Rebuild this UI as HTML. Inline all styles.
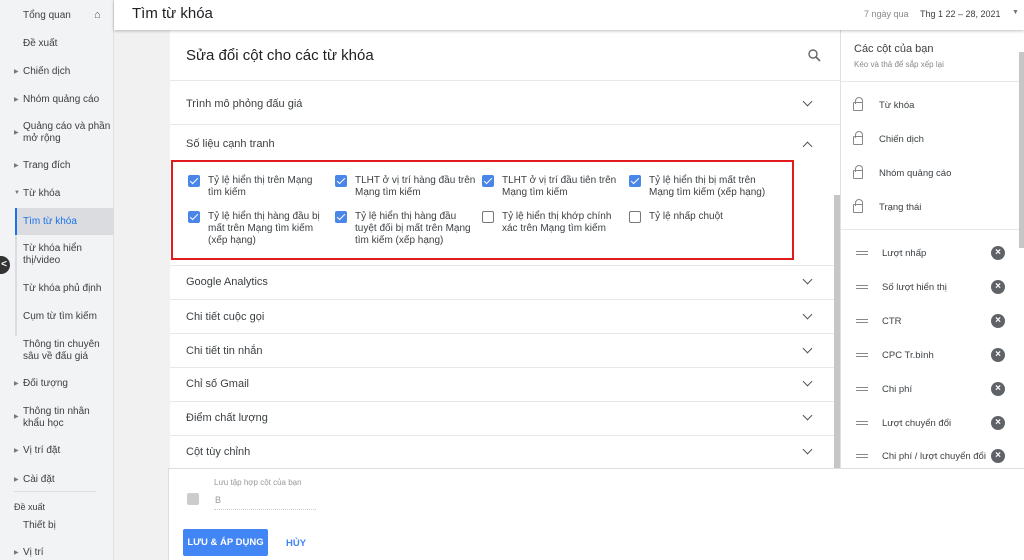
<!DOCTYPE html>
<html><head><meta charset="utf-8"><style>
*{margin:0;padding:0;box-sizing:border-box}
body{width:1024px;height:560px;overflow:hidden;background:#f1f1f1;font-family:"Liberation Sans",sans-serif;color:#3c4043;position:relative}
.a{position:absolute}
.sb{left:0;top:0;width:114px;height:560px;background:#f1f3f4;border-right:1px solid #e0e0e0}
.si{position:absolute;left:23px;font-size:10px;color:#3c4043;line-height:12px}
.tri{position:absolute;left:14px;font-size:6px;color:#777}
.hdr{left:114px;top:0;width:910px;height:30px;background:#fff;box-shadow:0 1px 3px rgba(0,0,0,.25);z-index:2}
.dlg{left:170px;top:30px;width:670px;height:438px;background:#fff}
.row{position:absolute;left:16px;font-size:11px;color:#3c4043}
.chev{position:absolute;left:634px;width:7px;height:7px;border-right:1.5px solid #555;border-bottom:1.5px solid #555;transform:rotate(45deg)}
.div{position:absolute;left:0;width:670px;height:1px;background:#e8e8e8}
.cb{position:absolute;width:12px;height:12px;border-radius:2px;background:#4a86e8}
.cb::after{content:"";position:absolute;left:3.5px;top:1px;width:3px;height:7px;border-right:1.6px solid #fff;border-bottom:1.6px solid #fff;transform:rotate(45deg)}
.cbo{position:absolute;width:12px;height:12px;border-radius:2px;border:1.5px solid #777}
.lb{position:absolute;font-size:10px;line-height:12px;color:#3c4043}
.rp{left:840px;top:30px;width:184px;height:438px;background:#fff;border-left:1px solid #e0e0e0}
.ri{position:absolute;left:38px;font-size:9.5px;color:#3c4043}
.lock{position:absolute;left:12px;width:10px;height:9px;border:1px solid #888;border-radius:1px}
.lock::before{content:"";position:absolute;left:1px;top:-6px;width:6px;height:6px;border:1px solid #888;border-bottom:none;border-radius:4px 4px 0 0}
.hb{position:absolute;left:15px;width:12px;height:4px;border-top:1.5px solid #888;border-bottom:1.5px solid #888}
.x{position:absolute;left:150px;width:14px;height:14px;border-radius:50%;background:#5f6368;color:#fff;font-size:10px;line-height:14px;text-align:center;font-weight:bold}
</style></head><body>
<div class="a sb">
<div class="si" style="top:10px">Tổng quan</div>
<div class="a" style="left:94px;top:9px;font-size:11px;color:#555">&#8962;</div>
<div class="si" style="top:38px">Đề xuất</div>
<div class="tri" style="top:68px">▶</div><div class="si" style="top:66px">Chiến dịch</div>
<div class="tri" style="top:96px">▶</div><div class="si" style="top:94px">Nhóm quảng cáo</div>
<div class="tri" style="top:129px">▶</div><div class="si" style="top:121px">Quảng cáo và phần<br>mở rộng</div>
<div class="tri" style="top:162px">▶</div><div class="si" style="top:160px">Trang đích</div>
<div class="tri" style="top:190px">▼</div><div class="si" style="top:188px">Từ khóa</div>
<div class="a" style="left:15px;top:208px;width:2px;height:128px;background:#dadce0"></div>
<div class="a" style="left:15px;top:208px;width:99px;height:27px;background:#dadce0;border-left:2px solid #1a73e8"></div>
<div class="si" style="top:216px;color:#1a73e8">Tìm từ khóa</div>
<div class="si" style="top:243px">Từ khóa hiển<br>thị/video</div>
<div class="si" style="top:283px">Từ khóa phủ định</div>
<div class="si" style="top:311px">Cụm từ tìm kiếm</div>
<div class="si" style="top:339px">Thông tin chuyên<br>sâu về đấu giá</div>
<div class="tri" style="top:380px">▶</div><div class="si" style="top:378px">Đối tượng</div>
<div class="tri" style="top:413px">▶</div><div class="si" style="top:406px">Thông tin nhân<br>khẩu học</div>
<div class="tri" style="top:447px">▶</div><div class="si" style="top:445px">Vị trí đặt</div>
<div class="tri" style="top:476px">▶</div><div class="si" style="top:474px">Cài đặt</div>
<div class="a" style="left:14px;top:491px;width:82px;height:1px;background:#ddd"></div>
<div class="si" style="left:14px;top:501px;font-size:9px">Đề xuất</div>
<div class="si" style="top:520px">Thiết bị</div>
<div class="tri" style="top:549px">▶</div><div class="si" style="top:547px">Vị trí</div>
</div>
<div class="a" style="left:-8px;top:256px;width:18px;height:18px;border-radius:50%;background:#333;z-index:3;color:#fff;font-size:10px;line-height:18px;text-align:right;padding-right:3px;font-weight:bold">&lt;</div>
<div class="a hdr">
<div class="a" style="left:18px;top:5px;font-size:15px;color:#202124">Tìm từ khóa</div>
<div class="a" style="left:750px;top:9px;font-size:9px;color:#888">7 ngày qua</div>
<div class="a" style="left:806px;top:9px;font-size:9px;color:#3c4043">Thg 1 22 – 28, 2021</div>
<div class="a" style="left:898px;top:9px;font-size:7px;color:#777">▼</div>
</div>
<div class="a dlg">
<div class="a" style="left:16px;top:17px;font-size:15px;color:#202124">Sửa đổi cột cho các từ khóa</div>
<svg class="a" style="left:638px;top:19px" width="13" height="13" viewBox="0 0 13 13"><circle cx="5" cy="5" r="4" fill="none" stroke="#666" stroke-width="1.4"/><path d="M8 8 L12 12" stroke="#666" stroke-width="1.6"/></svg>
<div class="div" style="top:50px"></div>
<div class="row" style="top:68px">Trình mô phỏng đấu giá</div><div class="chev" style="top:68px"></div>
<div class="div" style="top:94px"></div>
<div class="row" style="top:108px">Số liệu cạnh tranh</div><div class="chev" style="top:113px;transform:rotate(-135deg)"></div>
<div class="a" style="left:1px;top:130px;width:623px;height:100px;border:2px solid #e01b1b"></div>
<div class="cb" style="left:18px;top:145px"></div><div class="lb" style="left:38px;top:145px">Tỷ lệ hiển thị trên Mạng<br>tìm kiếm</div>
<div class="cb" style="left:165px;top:145px"></div><div class="lb" style="left:185px;top:145px">TLHT ở vị trí hàng đầu trên<br>Mạng tìm kiếm</div>
<div class="cb" style="left:312px;top:145px"></div><div class="lb" style="left:332px;top:145px">TLHT ở vị trí đầu tiên trên<br>Mạng tìm kiếm</div>
<div class="cb" style="left:459px;top:145px"></div><div class="lb" style="left:479px;top:145px">Tỷ lệ hiển thị bị mất trên<br>Mạng tìm kiếm (xếp hạng)</div>
<div class="cb" style="left:18px;top:181px"></div><div class="lb" style="left:38px;top:181px">Tỷ lệ hiển thị hàng đầu bị<br>mất trên Mạng tìm kiếm<br>(xếp hạng)</div>
<div class="cb" style="left:165px;top:181px"></div><div class="lb" style="left:185px;top:181px">Tỷ lệ hiển thị hàng đầu<br>tuyệt đối bị mất trên Mạng<br>tìm kiếm (xếp hạng)</div>
<div class="cbo" style="left:312px;top:181px"></div><div class="lb" style="left:332px;top:181px">Tỷ lệ hiển thị khớp chính<br>xác trên Mạng tìm kiếm</div>
<div class="cbo" style="left:459px;top:181px"></div><div class="lb" style="left:479px;top:181px">Tỷ lệ nhấp chuột</div>
<div class="div" style="top:235px"></div>
<div class="row" style="top:246px">Google Analytics</div><div class="chev" style="top:246px"></div>
<div class="div" style="top:269px"></div>
<div class="row" style="top:281px">Chi tiết cuộc gọi</div><div class="chev" style="top:281px"></div>
<div class="div" style="top:303px"></div>
<div class="row" style="top:315px">Chi tiết tin nhắn</div><div class="chev" style="top:315px"></div>
<div class="div" style="top:337px"></div>
<div class="row" style="top:348px">Chỉ số Gmail</div><div class="chev" style="top:348px"></div>
<div class="div" style="top:371px"></div>
<div class="row" style="top:382px">Điểm chất lượng</div><div class="chev" style="top:382px"></div>
<div class="div" style="top:405px"></div>
<div class="row" style="top:416px">Cột tùy chỉnh</div><div class="chev" style="top:416px"></div>
<div class="a" style="left:664px;top:165px;width:6px;height:273px;background:#c6c6c6"></div>
</div>
<div class="a rp">
<div class="a" style="left:13px;top:13px;font-size:11px;color:#3c4043">Các cột của bạn</div>
<div class="a" style="left:13px;top:30px;font-size:8px;color:#888">Kéo và thả để sắp xếp lại</div>
<div class="a" style="left:0;top:51px;width:184px;height:1px;background:#e8e8e8"></div>
<div class="lock" style="top:72px"></div><div class="ri" style="top:70px">Từ khóa</div>
<div class="lock" style="top:106px"></div><div class="ri" style="top:104px">Chiến dịch</div>
<div class="lock" style="top:140px"></div><div class="ri" style="top:138px">Nhóm quảng cáo</div>
<div class="lock" style="top:174px"></div><div class="ri" style="top:172px">Trạng thái</div>
<div class="a" style="left:0;top:199px;width:184px;height:1px;background:#e8e8e8"></div>
<div class="hb" style="top:221px"></div><div class="ri" style="left:41px;top:218px">Lượt nhấp</div><div class="x" style="top:216px">×</div>
<div class="hb" style="top:255px"></div><div class="ri" style="left:41px;top:252px">Số lượt hiển thị</div><div class="x" style="top:250px">×</div>
<div class="hb" style="top:289px"></div><div class="ri" style="left:41px;top:286px">CTR</div><div class="x" style="top:284px">×</div>
<div class="hb" style="top:323px"></div><div class="ri" style="left:41px;top:320px">CPC Tr.bình</div><div class="x" style="top:318px">×</div>
<div class="hb" style="top:357px"></div><div class="ri" style="left:41px;top:354px">Chi phí</div><div class="x" style="top:352px">×</div>
<div class="hb" style="top:391px"></div><div class="ri" style="left:41px;top:388px">Lượt chuyển đổi</div><div class="x" style="top:386px">×</div>
<div class="hb" style="top:424px"></div><div class="ri" style="left:41px;top:421px">Chi phí / lượt chuyển đổi</div><div class="x" style="top:419px">×</div>
<div class="a" style="left:178px;top:22px;width:5px;height:196px;background:#c6c6c6"></div>
</div>
<div class="a" style="left:168px;top:468px;width:856px;height:92px;background:#fff;border-top:1px solid #ddd;border-left:1px solid #ddd">
<div class="a" style="left:18px;top:24px;width:12px;height:12px;background:#ccc;border-radius:2px"></div>
<div class="a" style="left:45px;top:9px;font-size:8px;color:#999">Lưu tập hợp cột của bạn</div>
<div class="a" style="left:46px;top:26px;font-size:9px;color:#999">B</div>
<div class="a" style="left:45px;top:40px;width:102px;height:1px;border-top:1px dotted #ccc"></div>
<div class="a" style="left:14px;top:60px;width:85px;height:27px;background:#4285f4;border-radius:2px;color:#fff;font-size:9.5px;font-weight:bold;line-height:27px;text-align:center">LƯU &amp; ÁP DỤNG</div>
<div class="a" style="left:117px;top:69px;font-size:9.5px;font-weight:bold;color:#4285f4">HỦY</div>
</div>
</body></html>
